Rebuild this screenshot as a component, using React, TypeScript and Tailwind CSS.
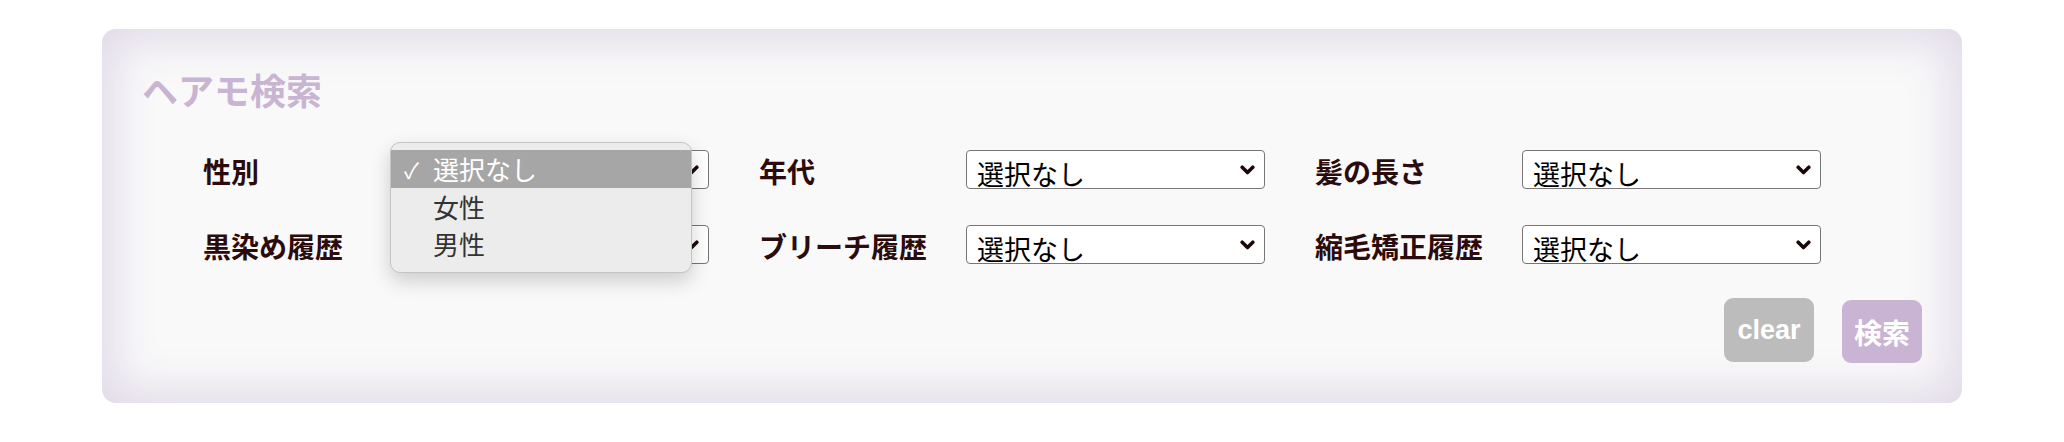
import type { ReactNode } from 'react';

const OPTIONS = ['選択なし', '女性', '男性'];

function Chevron() {
  return (
    <svg
      width="15"
      height="10"
      viewBox="0 0 15 10"
      className="pointer-events-none absolute right-[10px] top-1/2 -translate-y-1/2"
    >
      <path d="M2.2 2.2 L7.5 7.5 L12.8 2.2" fill="none" stroke="#1c0808" strokeWidth="3.6" strokeLinecap="round" strokeLinejoin="round" />
    </svg>
  );
}

function SelectBox({ children }: { children?: ReactNode }) {
  return (
    <div className="relative w-[299px] shrink-0">
      <select
        defaultValue=""
        className="box-border h-[39px] w-full appearance-none rounded-[4px] border border-[#767676] bg-white pl-[10px] pr-8 pt-[8px] text-[27px] leading-none text-black outline-none [font-family:'Noto_Sans_CJK_JP',sans-serif]"
      >
        <option value="">選択なし</option>
        <option value="1">女性</option>
        <option value="2">男性</option>
      </select>
      <Chevron />
      {children}
    </div>
  );
}

function OpenMenu() {
  return (
    <div className="absolute left-[-20px] top-[-8px] z-10 w-[302px] rounded-[10px] border border-[#c4c4c4] bg-[#ececec] pb-[10px] pt-[7px] shadow-[0_8px_20px_rgba(0,0,0,0.18)] [font-family:'Noto_Sans_CJK_JP',sans-serif]">
      {OPTIONS.map((opt, i) => (
        <div
          key={opt}
          className={
            i === 0
              ? 'flex h-[38px] items-center bg-[#a6a6a6] text-[26px] text-white'
              : 'flex h-[37px] items-center text-[26px] text-[#333333]'
          }
        >
          <span className="w-[42px] pl-[13px] text-[22px] leading-none">{i === 0 ? '✓' : ''}</span>
          <span className="leading-none">{opt}</span>
        </div>
      ))}
    </div>
  );
}

function Field({ label, open }: { label: string; open?: boolean }) {
  return (
    <div className="flex h-[39px] items-start">
      <span className="h-[39px] w-[207px] shrink-0 pt-[3px] text-[28px] font-bold leading-[36px] text-[#2b0b0b]">{label}</span>
      <SelectBox>{open && <OpenMenu />}</SelectBox>
    </div>
  );
}

export default function App() {
  return (
    <div className="min-h-[442px] bg-white pt-[29px] [font-family:'Noto_Sans_CJK_JP',sans-serif]">
      <section className="mx-auto w-[1860px] rounded-[14px] bg-[#f9f9f9] px-[40px] pb-[40px] pt-[38px] shadow-[inset_0_0_45px_12px_#e1dae8]">
        <h1 className="text-[36px] font-bold leading-[44px] text-[#c9b4d3]">ヘアモ検索</h1>

        <div className="ml-[61px] mt-[39px] grid grid-cols-[506px_506px_506px] gap-x-[50px] gap-y-[36px]">
          <Field label="性別" open />
          <Field label="年代" />
          <Field label="髪の長さ" />
          <Field label="黒染め履歴" />
          <Field label="ブリーチ履歴" />
          <Field label="縮毛矯正履歴" />
        </div>

        <div className="mt-[34px] flex items-start justify-end gap-[28px]">
          <button className="h-[64px] w-[90px] rounded-[9px] bg-[#bcbcbc] text-[27px] font-bold text-white [font-family:'Liberation_Sans',Arial,sans-serif]">
            clear
          </button>
          <button className="mt-[2px] h-[63px] w-[80px] rounded-[9px] bg-[#c9b4d3] text-[28px] font-bold text-white">
            検索
          </button>
        </div>
      </section>
    </div>
  );
}
